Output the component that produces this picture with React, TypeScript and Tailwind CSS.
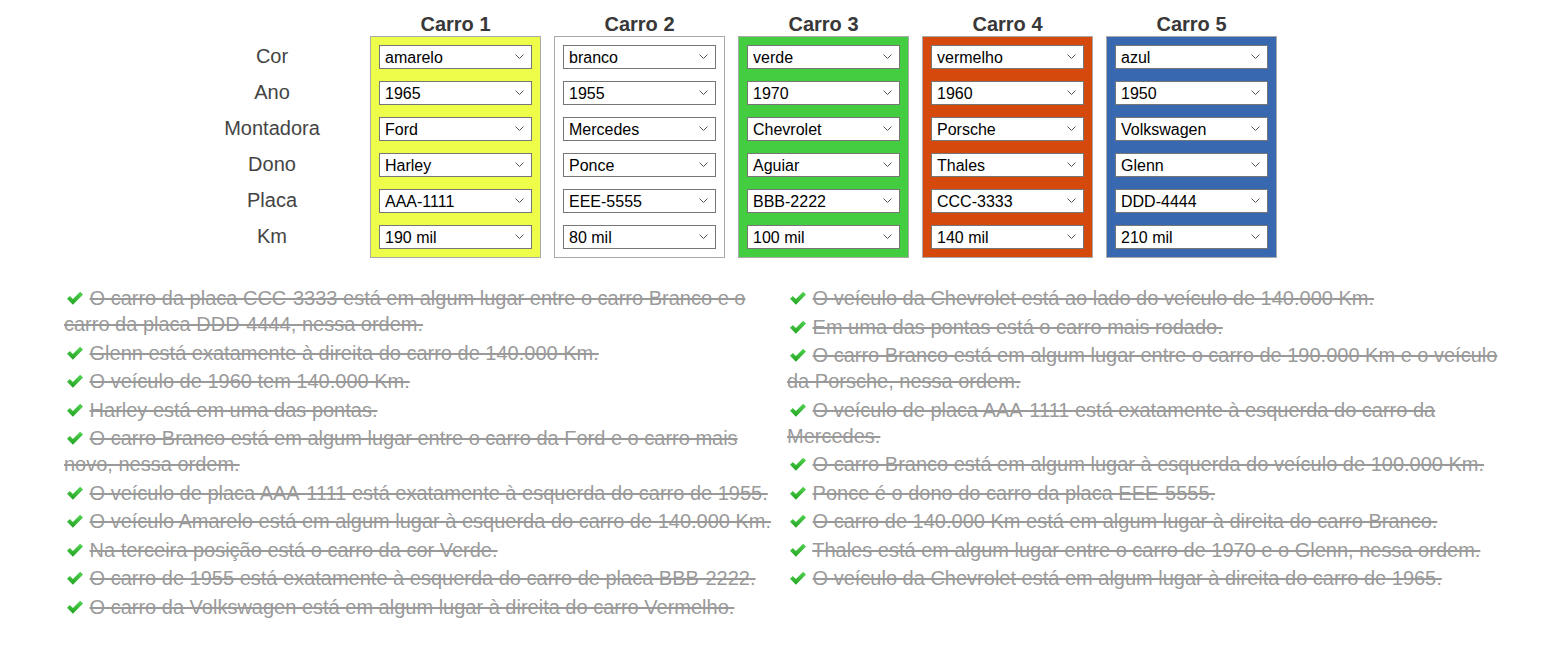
import { useState } from 'react'

interface Car {
  title: string
  bg: string
  values: string[]
}

const attributes = ['Cor', 'Ano', 'Montadora', 'Dono', 'Placa', 'Km']

const options: string[][] = [
  ['amarelo', 'azul', 'branco', 'verde', 'vermelho'],
  ['1950', '1955', '1960', '1965', '1970'],
  ['Chevrolet', 'Ford', 'Mercedes', 'Porsche', 'Volkswagen'],
  ['Aguiar', 'Glenn', 'Harley', 'Ponce', 'Thales'],
  ['AAA-1111', 'BBB-2222', 'CCC-3333', 'DDD-4444', 'EEE-5555'],
  ['80 mil', '100 mil', '140 mil', '190 mil', '210 mil'],
]

const cars: Car[] = [
  { title: 'Carro 1', bg: 'bg-[#eefd4a]', values: ['amarelo', '1965', 'Ford', 'Harley', 'AAA-1111', '190 mil'] },
  { title: 'Carro 2', bg: 'bg-white', values: ['branco', '1955', 'Mercedes', 'Ponce', 'EEE-5555', '80 mil'] },
  { title: 'Carro 3', bg: 'bg-[#45cd41]', values: ['verde', '1970', 'Chevrolet', 'Aguiar', 'BBB-2222', '100 mil'] },
  { title: 'Carro 4', bg: 'bg-[#d54a0c]', values: ['vermelho', '1960', 'Porsche', 'Thales', 'CCC-3333', '140 mil'] },
  { title: 'Carro 5', bg: 'bg-[#3868b0]', values: ['azul', '1950', 'Volkswagen', 'Glenn', 'DDD-4444', '210 mil'] },
]

const cluesLeft = [
  'O carro da placa CCC-3333 está em algum lugar entre o carro Branco e o carro da placa DDD-4444, nessa ordem.',
  'Glenn está exatamente à direita do carro de 140.000 Km.',
  'O veículo de 1960 tem 140.000 Km.',
  'Harley está em uma das pontas.',
  'O carro Branco está em algum lugar entre o carro da Ford e o carro mais novo, nessa ordem.',
  'O veículo de placa AAA-1111 está exatamente à esquerda do carro de 1955.',
  'O veículo Amarelo está em algum lugar à esquerda do carro de 140.000 Km.',
  'Na terceira posição está o carro da cor Verde.',
  'O carro de 1955 está exatamente à esquerda do carro de placa BBB-2222.',
  'O carro da Volkswagen está em algum lugar à direita do carro Vermelho.',
]

const cluesRight = [
  'O veículo da Chevrolet está ao lado do veículo de 140.000 Km.',
  'Em uma das pontas está o carro mais rodado.',
  'O carro Branco está em algum lugar entre o carro de 190.000 Km e o veículo da Porsche, nessa ordem.',
  'O veículo de placa AAA-1111 está exatamente à esquerda do carro da Mercedes.',
  'O carro Branco está em algum lugar à esquerda do veículo de 100.000 Km.',
  'Ponce é o dono do carro da placa EEE-5555.',
  'O carro de 140.000 Km está em algum lugar à direita do carro Branco.',
  'Thales está em algum lugar entre o carro de 1970 e o Glenn, nessa ordem.',
  'O veículo da Chevrolet está em algum lugar à direita do carro de 1965.',
]

const CheckIcon = () => (
  <svg width="20" height="20" viewBox="0 0 20 20" className="inline-block align-[-3px]">
    <defs>
      <linearGradient id="ok" x1="0" y1="0" x2="0" y2="1">
        <stop offset="0" stopColor="#52d552" />
        <stop offset="1" stopColor="#22a322" />
      </linearGradient>
    </defs>
    <path d="M3 10.8 L5.9 7.9 L8.9 10.9 L16.1 3.7 L19 6.6 L8.9 16.7 Z" fill="url(#ok)" />
  </svg>
)

const Clue = ({ text }: { text: string }) => (
  <li className="mb-[2.5px] leading-[26px]">
    <CheckIcon />{' '}
    <span className="line-through">{text}</span>
  </li>
)

const CarSelect = ({ value, list }: { value: string; list: string[] }) => {
  const [current, setCurrent] = useState(value)
  return (
    <div className="relative h-[24px] w-[153px]">
      <select
        value={current}
        onChange={e => setCurrent(e.target.value)}
        className="h-[24px] w-full appearance-none rounded-none border border-[#767676] bg-white pl-[5px] pt-[2px] text-[16px] leading-[20px] text-black outline-none"
      >
        {list.map(o => (
          <option key={o} value={o}>{o}</option>
        ))}
      </select>
      {/* chevron */}
      <svg
        width="9"
        height="5"
        viewBox="0 0 9 5"
        className="pointer-events-none absolute right-[8px] top-[9px]"
      >
        <path d="M0.5 0.5 L4.5 4.5 L8.5 0.5" fill="none" stroke="#555" strokeWidth="1" />
      </svg>
    </div>
  )
}

const App = () => {
  return (
    <div className="min-h-[661px] bg-white pt-[12px] font-['Liberation_Sans',Arial,sans-serif]">
      {/* Grid of cars */}
      <div className="flex">
        <div className="ml-[222px] flex w-[100px] flex-col gap-[12px] pt-[32px]">
          {attributes.map(a => (
            <div key={a} className="flex h-[24px] items-center justify-center text-[20px] text-[#444]">
              {a}
            </div>
          ))}
        </div>

        <div className="ml-[48px] flex gap-[13px]">
          {cars.map((car, ci) => (
            <div key={car.title} className="flex w-[171px] flex-col">
              <div className="h-[24px] text-center text-[20px] font-bold leading-[24px] text-[#383838]">
                {car.title}
              </div>
              <div className={`flex flex-col gap-[12px] border border-[#aaa] p-[8px] ${car.bg}`}>
                {car.values.map((v, i) => (
                  <CarSelect key={`${ci}-${i}`} value={v} list={options[i]} />
                ))}
              </div>
            </div>
          ))}
        </div>
      </div>

      {/* Clues */}
      <div className="ml-[64px] mt-[27px] flex text-[20px] text-[#9a9a9a]">
        <ul className="w-[723px]">
          {cluesLeft.map(c => (
            <Clue key={c} text={c} />
          ))}
        </ul>
        <ul className="w-[723px]">
          {cluesRight.map(c => (
            <Clue key={c} text={c} />
          ))}
        </ul>
      </div>
    </div>
  )
}

export default App
